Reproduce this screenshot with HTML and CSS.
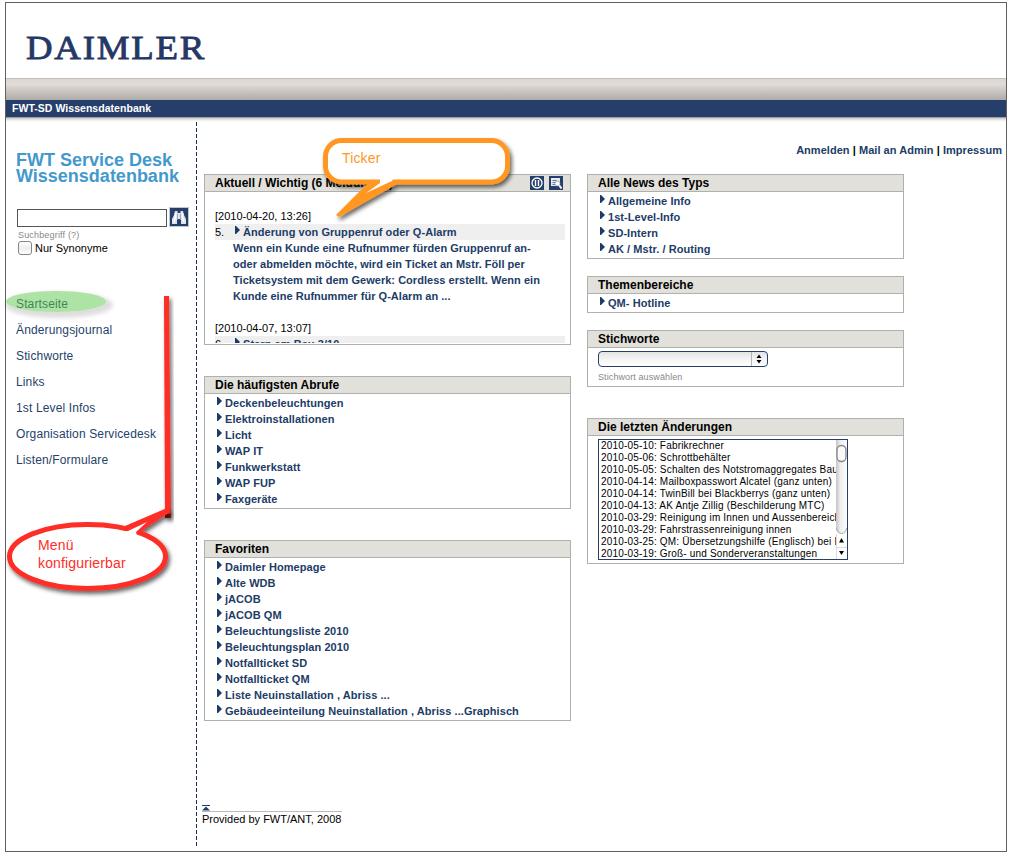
FILE: index.html
```html
<!DOCTYPE html>
<html lang="de">
<head>
<meta charset="utf-8">
<title>FWT-SD Wissensdatenbank</title>
<link rel="stylesheet" href="styles.css">
</head>
<body>
<div class="frame">
  <header class="brand">
    <svg class="logo" width="190" height="40" viewBox="0 0 190 40" role="img" aria-label="Daimler"><text x="5" y="29" textLength="180" lengthAdjust="spacingAndGlyphs">DAIMLER</text></svg>
  </header>
  <div class="silver"></div>
  <div class="titlebar">FWT-SD Wissensdatenbank</div>
  <div class="shade"></div>
  <div class="content">
    <aside class="sidebar">
      <h1>FWT Service Desk<br>Wissensdatenbank</h1>
      <form class="search">
        <input class="search-field" type="text" aria-label="Suchbegriff">
        <button class="search-button" type="button" aria-label="Suchen">
          <svg width="18" height="18" viewBox="0 0 18 18"><path d="M5 3h2.500v2h3V3H13l1 4 2 4v5h-5v-4l-1-1H8l-1 1v4H2v-5l2-4z" fill="#dfe2e8"/><path d="M5.500 5v4L4 14M12.500 5v4l1.500 5" stroke="#fff" stroke-width="1.500" fill="none"/><path d="M7.500 6v5M10.500 6v5" stroke="#9aa5bb" fill="none"/></svg>
        </button>
      </form>
      <div class="hint">Suchbegriff (?)</div>
      <div class="synonyms"><span class="check"></span>Nur Synonyme</div>
      <nav class="menu">
        <a>Startseite</a><a>Änderungsjournal</a><a>Stichworte</a><a>Links</a><a>1st Level Infos</a><a>Organisation Servicedesk</a><a>Listen/Formulare</a>
      </nav>
    </aside>
    <main class="main">
      <div class="toplinks"><a>Anmelden</a> | <a>Mail an Admin</a> | <a>Impressum</a></div>
      <div class="columns">
        <div class="col-left">
          <section class="box ticker">
            <h2>Aktuell / Wichtig (6 Meldungen)
              <span class="tools">
                <svg width="14" height="14" viewBox="0 0 14 14"><rect width="14" height="14" fill="#263f6a"/><circle cx="7" cy="7" r="5" fill="none" stroke="#fff" stroke-width="1.300"/><path d="M5.500 4v6M8.500 4v6" stroke="#fff" stroke-width="1.400"/></svg>
                <svg width="14" height="14" viewBox="0 0 14 14"><rect width="14" height="14" fill="#263f6a"/><path d="M2 2h9v8H2z" fill="#e6e9ef"/><path d="M3.500 4.500h4M3.500 6.500h3M3.500 8.500h3" stroke="#66789b"/><circle cx="8.500" cy="7.500" r="2.500" fill="#fff" stroke="#8997b0" stroke-width=".7"/><path d="m10.300 9.500 2.200 3" stroke="#fff" stroke-width="2"/></svg>
              </span>
            </h2>
            <div class="news">
              <p class="date">[2010-04-20, 13:26]</p>
              <p class="item"><span class="num">5.</span><a class="link">Änderung von Gruppenruf oder Q-Alarm</a></p>
              <p class="text">Wenn ein Kunde eine Rufnummer fürden Gruppenruf an-<br>oder abmelden möchte, wird ein Ticket an Mstr. Föll per<br>Ticketsystem mit dem Gewerk: Cordless erstellt. Wenn ein<br>Kunde eine Rufnummer für Q-Alarm an ...</p>
              <p class="date">[2010-04-07, 13:07]</p>
              <p class="item"><span class="num">6.</span><a class="link">Stern am Bau 3/10</a></p>
            </div>
          </section>
          <section class="box">
            <h2>Die häufigsten Abrufe</h2>
            <div class="links"><a class="link">Deckenbeleuchtungen</a><a class="link">Elektroinstallationen</a><a class="link">Licht</a><a class="link">WAP IT</a><a class="link">Funkwerkstatt</a><a class="link">WAP FUP</a><a class="link">Faxgeräte</a></div>
          </section>
          <section class="box">
            <h2>Favoriten</h2>
            <div class="links"><a class="link">Daimler Homepage</a><a class="link">Alte WDB</a><a class="link">jACOB</a><a class="link">jACOB QM</a><a class="link">Beleuchtungsliste 2010</a><a class="link">Beleuchtungsplan 2010</a><a class="link">Notfallticket SD</a><a class="link">Notfallticket QM</a><a class="link">Liste Neuinstallation , Abriss ...</a><a class="link">Gebäudeeinteilung Neuinstallation , Abriss ...Graphisch</a></div>
          </section>
        </div>
        <div class="col-right">
          <section class="box">
            <h2>Alle News des Typs</h2>
            <div class="links"><a class="link">Allgemeine Info</a><a class="link">1st-Level-Info</a><a class="link">SD-Intern</a><a class="link">AK / Mstr. / Routing</a></div>
          </section>
          <section class="box">
            <h2>Themenbereiche</h2>
            <div class="links"><a class="link">QM- Hotline</a></div>
          </section>
          <section class="box keywords">
            <h2>Stichworte</h2>
            <div class="picker"><svg width="16" height="14" viewBox="0 0 16 14"><path d="M.5 0v14" stroke="#b5b5b5"/><path d="M8 2.500 10.500 6h-5zM8 11.500 10.500 8h-5z" fill="#000"/></svg></div>
            <div class="hint">Stichwort auswählen</div>
          </section>
          <section class="box changes">
            <h2>Die letzten Änderungen</h2>
            <div class="listbox">
              <div class="entries">
                <div>2010-05-10: Fabrikrechner</div>
                <div>2010-05-06: Schrottbehälter</div>
                <div>2010-05-05: Schalten des Notstromaggregates Bau</div>
                <div>2010-04-14: Mailboxpasswort Alcatel (ganz unten)</div>
                <div>2010-04-14: TwinBill bei Blackberrys (ganz unten)</div>
                <div>2010-04-13: AK Antje Zillig (Beschilderung MTC)</div>
                <div>2010-03-29: Reinigung im Innen und Aussenbereich</div>
                <div>2010-03-29: Fahrstrassenreinigung innen</div>
                <div>2010-03-25: QM: Übersetzungshilfe (Englisch) bei E</div>
                <div>2010-03-19: Groß- und Sonderveranstaltungen</div>
              </div>
              <svg class="scroll" width="11" height="119" viewBox="0 0 11 119">
                <defs><linearGradient id="track"><stop offset="0" stop-color="#c4c4c4"/><stop offset=".4" stop-color="#efefef"/><stop offset="1" stop-color="#fdfdfd"/></linearGradient></defs>
                <path d="M0 0h11v88a5.500 6 0 0 1-11 0z" fill="url(#track)"/>
                <path d="M.5 88a5 5.500 0 0 0 10 0" fill="none" stroke="#aaa"/>
                <rect x="1" y="5.500" width="9" height="16" rx="4.500" fill="#fafafa" stroke="#858585" stroke-width="1.300"/>
                <path d="M0 107.500h11M.5 94v25" stroke="#ddd"/>
                <path d="M5.500 98 8 102.500H3zM5.500 115 8 111H3z" fill="#000"/>
              </svg>
            </div>
          </section>
        </div>
      </div>
      <footer class="footer">
        <svg width="8" height="6" viewBox="0 0 8 6"><path d="M0 0h8v1H0zM4 1.500 8 5.500H0z" fill="#263f6a"/></svg>
        <div class="provided">Provided by FWT/ANT, 2008</div>
      </footer>
    </main>
  </div>
</div>
<svg class="notes" width="1016" height="864" viewBox="0 0 1016 864">
  <defs>
    <filter id="drop" x="-20%" y="-30%" width="150%" height="180%"><feDropShadow dx="2" dy="3" stdDeviation="2" flood-color="#000" flood-opacity=".6"/></filter>
    <filter id="soft" x="-20%" y="-60%" width="140%" height="220%"><feGaussianBlur stdDeviation="2"/></filter>
    <mask id="around"><rect width="1016" height="864" fill="#fff"/><ellipse cx="56" cy="301.500" rx="50" ry="10.500" fill="#000"/></mask>
  </defs>
  <g mask="url(#around)"><ellipse cx="59" cy="305" rx="54" ry="13" fill="#000" opacity=".13" filter="url(#soft)"/></g>
  <ellipse cx="56" cy="301.500" rx="50" ry="10.500" fill="#5cc84a" opacity=".5"/>
  <g filter="url(#drop)">
    <rect x="325.500" y="140.500" width="182" height="41.500" rx="16" fill="#fff" stroke="#ff9722" stroke-width="5"/>
    <path d="M368 183 336 215l3 2 60-34z" fill="#ff9722"/>
    <path d="M380 179h13l-1 2-26 12 14-10z" fill="#fff"/>
  </g>
  <text x="342" y="163" class="note-orange">Ticker</text>
  <path d="M164 296h5l2 222h-6z" fill="#fd2e27" filter="url(#drop)"/>
  <path d="M165 514h6v4h-6z" fill="#9c1712"/>
  <g filter="url(#drop)">
    <ellipse cx="87.500" cy="556.500" rx="78" ry="32" fill="#fff" stroke="#fd2e27" stroke-width="5"/>
    <path d="M125 526 167 508l3 4-33 22-12-4z" fill="#fd2e27"/>
    <path d="m121 532 7-1 19-9-11 10 1 4z" fill="#fff"/>
  </g>
  <text x="38" y="550" class="note-red">Menü</text>
  <text x="38" y="568" class="note-red">konfigurierbar</text>
</svg>
</body>
</html>
```
FILE: styles.css
```css
* { box-sizing: border-box; }
body {
  margin: 0;
  padding: 2px 5px;
  background: #fff;
  color: #000;
  font: 11px/16px "Liberation Sans", Arial, sans-serif;
}
h1, h2, p { margin: 0; }
.frame {
  width: 1002px;
  height: 850px;
  border: 1px solid #606060;
  display: flex;
  flex-direction: column;
}
.brand { height: 75px; padding: 27px 15px 0; }
.logo { display: block; }
.logo text {
  font: 34px "Liberation Serif", serif;
  letter-spacing: 1.6px;
  fill: #263766;
  stroke: #263766;
  stroke-width: .8px;
}
.silver {
  height: 22px;
  border-top: 1px solid #c6beb9;
  background: linear-gradient(#dcd6d1, #e1dcd7 25%, #c5c0bd 65%, #b0acaa);
}
.titlebar {
  height: 17px;
  padding-left: 6px;
  background: #263f6a;
  color: #fff;
  font-weight: bold;
  font-size: 10.5px;
  letter-spacing: .04px;
}
.shade { height: 5px; background: linear-gradient(#8f8b93, #ddd9d5 35%, #f0f4ef 70%, #fff); }
.content { flex: 1; display: flex; min-height: 0; }
.sidebar { width: 190px; padding: 30px 0 0 10px; }
.sidebar h1 { font-size: 18px; line-height: 16px; color: #4499cc; }
.search { display: flex; gap: 2px; margin: 22px 0 0 1px; height: 20px; }
.search-field { width: 150px; height: 18px; margin-top: 3px; border: 1px solid #555; padding: 0; background: #fff; }
.search-button { width: 20px; height: 20px; margin-top: 1px; padding: 0; border: 1px solid #c0c6d0; background: #263f6a; }
.search-button svg { display: block; }
.hint { font-size: 9px; line-height: 12px; color: #888; letter-spacing: .1px; }
.sidebar .hint { margin: 3px 0 0 2px; letter-spacing: .17px; }
.synonyms { display: flex; align-items: center; gap: 3px; height: 16px; margin: -1px 0 0 2px; }
.check {
  width: 14px;
  height: 14px;
  border: 1px solid #858585;
  border-radius: 3px;
  background: linear-gradient(#fff, #eee 50%, #fff);
}
.menu { display: flex; flex-direction: column; margin-top: 35px; font-size: 12px; line-height: 26px; color: #263f6a; letter-spacing: .14px; }
.main {
  flex: 1;
  padding-left: 8px;
  display: flex;
  flex-direction: column;
  background: repeating-linear-gradient(#1b2b4d 0 4px, #fff 4px 6px) 0 0 / 1px 725px no-repeat;
}
.toplinks { margin: 20px 4px 0 0; text-align: right; font-weight: bold; letter-spacing: .04px; }
.toplinks a, .link, .text { color: #213c66; }
.columns { display: flex; gap: 16px; margin-top: 16px; }
.col-left { width: 367px; display: flex; flex-direction: column; gap: 31px; }
.col-right { width: 317px; display: flex; flex-direction: column; gap: 17px; }
.box { border: 1px solid #b0b0ac; }
.box h2 {
  display: flex;
  justify-content: space-between;
  height: 17px;
  padding: 0 7px 0 10px;
  border-bottom: 1px solid #b0b0ac;
  background: #e1e0da;
  font-size: 12px;
  line-height: 16px;
}
.tools { display: flex; gap: 5px; padding-top: 1px; }
.ticker { height: 171px; }
.news { height: 151px; overflow: hidden; padding: 16px 5px 0 10px; }
.item { display: flex; background: #efefef; }
.num { width: 20px; }
.link { display: flex; align-items: center; font-weight: bold; letter-spacing: .06px; }
.link::before {
  content: "";
  flex: none;
  width: 5px;
  height: 8px;
  margin: -4px 3px 0 0;
  background: #1d3a68;
  clip-path: polygon(0 0, 1px 0, 100% 50%, 1px 100%, 0 100%);
}
.text { padding: 0 0 16px 18px; font-weight: bold; white-space: nowrap; letter-spacing: .03px; }
.links { padding: 1px 12px; }
.keywords { height: 57px; }
.picker {
  width: 170px;
  height: 16px;
  margin: 3px 0 0 10px;
  border: 1px solid #263f6a;
  border-radius: 4px;
  background: linear-gradient(#e4e4e4, #f4f4f4 50%, #fff);
  display: flex;
  justify-content: flex-end;
}
.picker + .hint { margin: 4px 10px 0; }
.changes { height: 146px; margin-top: 14px; }
.listbox { display: flex; width: 250px; height: 121px; margin: 3px 0 0 10px; border: 1px solid #263f6a; }
.entries { width: 237px; padding-left: 2px; overflow: hidden; white-space: nowrap; font-size: 10px; line-height: 12px; letter-spacing: .18px; }
.scroll { display: block; }
.footer { width: 140px; margin: 84px 0 0 -2px; line-height: 15px; }
.footer svg { display: block; }
.provided { border-top: 1px solid #bbb; white-space: nowrap; }
.notes { position: absolute; left: 0; top: 0; pointer-events: none; }
.note-orange { font-size: 14px; fill: #ff9722; letter-spacing: .15px; }
.note-red { font-size: 14px; fill: #fd2e27; letter-spacing: .15px; }
```
